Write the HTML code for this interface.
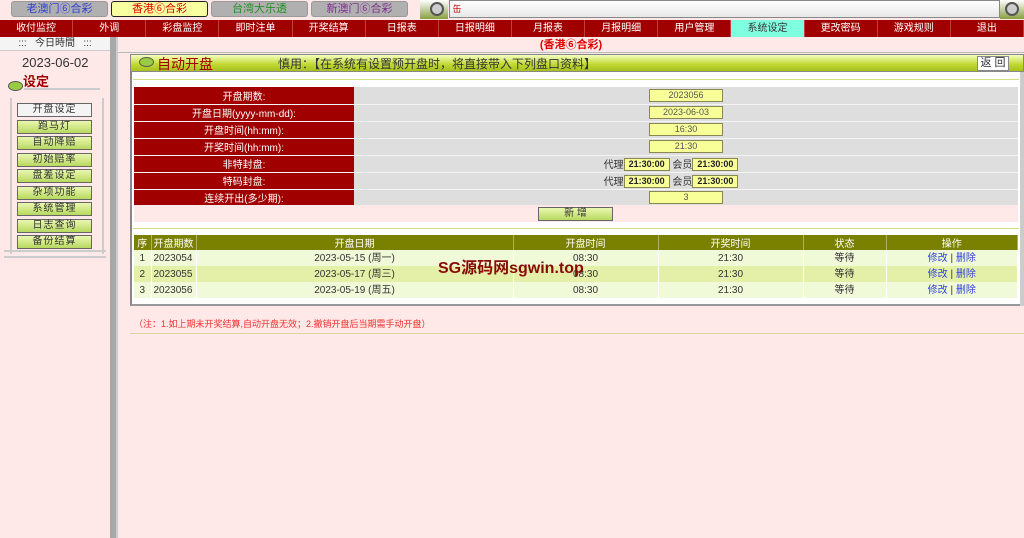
<!DOCTYPE html>
<html><head><meta charset="utf-8"><style>
*{margin:0;padding:0;box-sizing:border-box}
body{width:1024px;height:538px;overflow:hidden;background:#ffe8e8;font-family:"Liberation Sans","Noto Sans CJK SC",sans-serif;font-size:11px;color:#333;position:relative}
.abs{position:absolute}
.tab{position:absolute;top:1px;height:16px;width:97px;border-radius:3px;background:#b0b0b0;border:1px solid #999;text-align:center;line-height:14px;font-size:11px}
.nav{position:absolute;top:20px;left:0;width:1024px;height:17px;background:#a00000;display:flex}
.nav div{flex:1;color:#fff;text-align:center;line-height:17px;border-right:1px solid #c04040;font-size:10px}
.btn{position:absolute;left:17px;width:75px;height:14px;border:1px solid #666;background:linear-gradient(#eaf8b0,#b8d860);text-align:center;line-height:12px;font-size:10px;letter-spacing:1px}
table{border-collapse:collapse}
.form td{height:17px;border-bottom:1px solid #f4f4f4;font-size:10px}
.form td.l{background:#a00000;color:#fff;text-align:center;width:220px}
.form td.v{background:#dedede;text-align:center}
.inp{display:inline-block;width:74px;height:13px;background:#f8ff98;border:1px solid #888850;line-height:11px;font-size:9px;color:#555;vertical-align:middle}
.inp2{display:inline-block;width:46px;height:13px;background:#f8ff98;border:1px solid #888850;line-height:11px;font-size:9px;font-weight:bold;color:#222;vertical-align:middle}
.list{table-layout:fixed}
.list th{background:#7a8000;color:#fff;font-weight:normal;height:15px;font-size:10px;border-right:1px solid #b0b060;white-space:nowrap;overflow:hidden}
.list td{height:16px;line-height:15px;text-align:center;font-size:10px;border-right:1px solid #fff;white-space:nowrap;overflow:hidden;vertical-align:middle}
.list tr.a td{background:#f0fad8}.list tr.b td{background:#e4f0a8}
a{color:#3040e0;text-decoration:none}
</style></head><body>
<div class="tab" style="left:11px;color:#3040d0">老澳门⑥合彩</div>
<div class="tab" style="left:111px;background:#f8ffa0;border:1.5px solid #222;color:#e00000">香港⑥合彩</div>
<div class="tab" style="left:211px;color:#209020">台湾大乐透</div>
<div class="tab" style="left:311px;color:#803090">新澳门⑥合彩</div>
<div class="abs" style="left:420px;top:0;width:28px;height:19px;background:linear-gradient(#fff,#88a040)"></div>
<div class="abs" style="left:430px;top:2px;width:14px;height:14px;border-radius:50%;border:2px solid #555;background:#ccc"></div>
<div class="abs" style="left:449px;top:0;width:551px;height:18px;background:linear-gradient(#fff,#e8e8e8);border:1px solid #888;color:#c00;font-size:9px;line-height:16px">&nbsp;缶</div>
<div class="abs" style="left:1000px;top:0;width:24px;height:19px;background:linear-gradient(#fff,#88a040)"></div>
<div class="abs" style="left:1005px;top:2px;width:14px;height:14px;border-radius:50%;border:2px solid #555;background:#ccc"></div>
<div class="nav"><div>收付监控</div><div>外调</div><div>彩盘监控</div><div>即时注单</div><div>开奖结算</div><div>日报表</div><div>日报明细</div><div>月报表</div><div>月报明细</div><div>用户管理</div><div style="background:#80ffe0;color:#333">系统设定</div><div>更改密码</div><div>游戏规则</div><div>退出</div></div>
<!-- sidebar -->
<div class="abs" style="left:0;top:37px;width:110px;height:14px;background:#f4f4f4;border-bottom:1px solid #ccc;text-align:center;font-size:10px;line-height:14px;color:#333">:::&nbsp;&nbsp; 今日時間 &nbsp;&nbsp;:::</div>
<div class="abs" style="left:110px;top:37px;width:6px;height:501px;background:#a8a8a8"></div>
<div class="abs" style="left:116px;top:37px;width:2px;height:501px;background:#ccc"></div>
<div class="abs" style="left:22px;top:55px;font-size:13px;color:#333">2023-06-02</div>
<div class="abs" style="left:23px;top:71px;font-size:13px;color:#a00000;font-weight:bold">设定</div>
<div class="abs" style="left:8px;top:81px;width:15px;height:10px;border-radius:50%;background:#9c4;border:1px solid #555"></div>
<div class="abs" style="left:24px;top:88px;width:76px;height:2px;background:#ccc"></div>
<div class="abs" style="left:10px;top:98px;width:94px;height:156px;border-left:2px solid #ccc;border-right:2px solid #ccc"></div>
<div class="btn" style="top:103px;background:#f4f4f4">开盘设定</div>
<div class="btn" style="top:120px">跑马灯</div>
<div class="btn" style="top:136px">自动降赔</div>
<div class="btn" style="top:153px">初始赔率</div>
<div class="btn" style="top:169px">盘差设定</div>
<div class="btn" style="top:186px">杂项功能</div>
<div class="btn" style="top:202px">系统管理</div>
<div class="btn" style="top:219px">日志查询</div>
<div class="btn" style="top:235px">备份结算</div>
<div class="abs" style="left:4px;top:250px;width:102px;height:8px;border-top:2px solid #ccc;border-bottom:2px solid #ccc"></div>
<!-- main -->
<div class="abs" style="left:118px;top:37px;width:906px;height:16px;text-align:center;color:#e00000;font-weight:bold;font-size:11px;line-height:16px">(香港⑥合彩)</div>
<div class="abs" style="left:118px;top:52px;width:906px;height:1px;background:#bbb"></div>
<div class="abs" style="left:130px;top:54px;width:894px;height:18px;background:linear-gradient(#f4ffc0,#c0d830 60%,#a8c020);border:1px solid #888"></div>
<div class="abs" style="left:139px;top:57px;width:15px;height:10px;border-radius:50%;background:#9c4;border:1px solid #555"></div>
<div class="abs" style="left:157px;top:55px;font-size:14px;color:#a00000;line-height:18px">自动开盘</div>
<div class="abs" style="left:278px;top:55px;font-size:12px;color:#333;line-height:18px">慎用：【在系统有设置预开盘时，将直接带入下列盘口资料】</div>
<div class="abs" style="left:977px;top:56px;width:32px;height:15px;background:#fff;border:1px solid #888;text-align:center;font-size:11px;line-height:13px">返 回</div>
<div class="abs" style="left:130px;top:72px;width:892px;height:234px;background:#fff;border-left:2px solid #888;border-bottom:2px solid #999"></div>
<div class="abs" style="left:1020px;top:72px;width:4px;height:234px;background:#ccc"></div>
<div class="abs" style="left:133px;top:79px;width:886px;height:1px;background:#d0e080"></div>
<table class="form abs" style="left:134px;top:87px;width:884px">
<tr><td class="l">开盘期数:</td><td class="v"><span class="inp">2023056</span></td></tr>
<tr><td class="l">开盘日期(yyyy-mm-dd):</td><td class="v"><span class="inp">2023-06-03</span></td></tr>
<tr><td class="l">开盘时间(hh:mm):</td><td class="v"><span class="inp">16:30</span></td></tr>
<tr><td class="l">开奖时间(hh:mm):</td><td class="v"><span class="inp">21:30</span></td></tr>
<tr><td class="l">非特封盘:</td><td class="v">代理<span class="inp2">21:30:00</span> 会员<span class="inp2">21:30:00</span><span style="display:inline-block;width:30px"></span></td></tr>
<tr><td class="l">特码封盘:</td><td class="v">代理<span class="inp2">21:30:00</span> 会员<span class="inp2">21:30:00</span><span style="display:inline-block;width:30px"></span></td></tr>
<tr><td class="l">连续开出(多少期):</td><td class="v"><span class="inp">3</span></td></tr>
</table>
<div class="abs" style="left:134px;top:205px;width:884px;height:17px;background:#ffe8e8"></div>
<div class="abs" style="left:538px;top:207px;width:75px;height:14px;border:1px solid #666;background:linear-gradient(#eaf8b0,#b8d860);text-align:center;font-size:10px;line-height:12px">新 增</div>
<div class="abs" style="left:133px;top:228px;width:886px;height:1px;background:#d0e080"></div>
<table class="list abs" style="left:134px;top:235px;width:884px">
<colgroup><col style="width:17px"><col style="width:45px"><col style="width:317px"><col style="width:145px"><col style="width:145px"><col style="width:83px"><col></colgroup>
<tr><th>序</th><th>开盘期数</th><th>开盘日期</th><th>开盘时间</th><th>开奖时间</th><th>状态</th><th>操作</th></tr>
<tr class="a"><td>1</td><td style="text-align:left;padding-left:2px">2023054</td><td>2023-05-15 (周一)</td><td>08:30</td><td>21:30</td><td>等待</td><td><a>修改</a> | <a>删除</a></td></tr>
<tr class="b"><td>2</td><td style="text-align:left;padding-left:2px">2023055</td><td>2023-05-17 (周三)</td><td>08:30</td><td>21:30</td><td>等待</td><td><a>修改</a> | <a>删除</a></td></tr>
<tr class="a"><td>3</td><td style="text-align:left;padding-left:2px">2023056</td><td>2023-05-19 (周五)</td><td>08:30</td><td>21:30</td><td>等待</td><td><a>修改</a> | <a>删除</a></td></tr>
</table>
<div class="abs" style="left:438px;top:254px;font-size:16px;font-weight:bold;color:#8a0a0a">SG源码网sgwin.top</div>
<div class="abs" style="left:134px;top:317px;font-size:9px;color:#f03030">（注：1.如上期未开奖结算,自动开盘无效；2.撤销开盘后当期需手动开盘）</div>
<div class="abs" style="left:130px;top:333px;width:894px;height:1px;background:#d8d8a0"></div>
</body></html>
